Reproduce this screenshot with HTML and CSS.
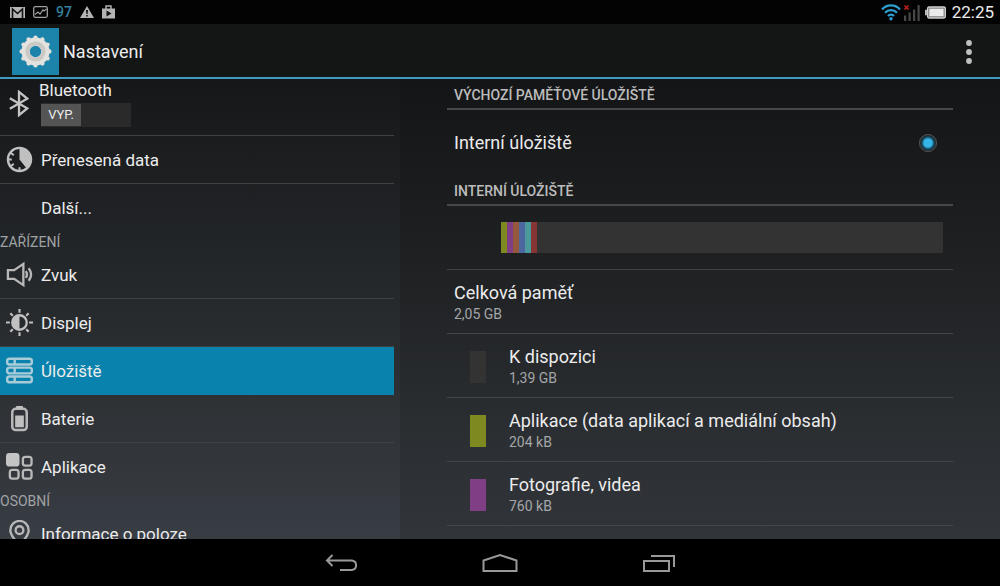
FILE: index.html
```html
<!DOCTYPE html>
<html lang="cs">
<head>
    <meta charset="UTF-8">
    <meta name="viewport" content="width=device-width, initial-scale=1.0">
    <title>Nastavení</title>
    <link rel="stylesheet" href="styles.css">
</head>
<body>
    <div class="status-bar">
        <div class="status-group status-left">
            <svg width="15" height="12" viewBox="0 0 15 12"><path fill="#b4b4b4" d="M0 1h15v11H0z"/><path fill="none" stroke="#111" stroke-width="1.600" d="M2.500 12V3l5 4.500 5-4.500v9"/></svg>
            <svg width="15" height="12" viewBox="0 0 15 12"><rect x=".7" y=".7" width="13.600" height="10.600" rx="1.500" fill="none" stroke="#a0a0a0" stroke-width="1.300"/><path fill="none" stroke="#a0a0a0" stroke-width="1.200" d="M2 8.500l3-2.500 2 2 3-4 1 1 2.500-2"/></svg>
            <span class="status-count">97</span>
            <svg width="14" height="12" viewBox="0 0 14 12"><path fill="#b4b4b4" d="M7 0l7 12H0z"/><path fill="#111" d="M6 4h2l-.4 4H6.400zM6.200 9h1.600v1.500H6.200z"/></svg>
            <svg width="13" height="14" viewBox="0 0 13 14"><path fill="none" stroke="#b4b4b4" stroke-width="1.400" d="M4 4V1h5v3"/><path fill="#b4b4b4" d="M0 3.500h13v10H0z"/><path fill="#111" d="M4.500 5.500l5 3-5 3z"/></svg>
        </div>
        <div class="status-group status-right">
            <svg width="20" height="18" viewBox="0 0 20 18"><g fill="none" stroke="#2f9fd0" stroke-width="2.200"><path d="M1 6.500c5-5.500 13-5.500 18 0"/><path d="M4 9.800c3.300-3.600 8.700-3.600 12 0"/><path d="M7 13c1.700-1.800 4.300-1.800 6 0"/></g><circle cx="10" cy="15.800" r="1.700" fill="#2f9fd0"/></svg>
            <svg class="signal" width="18" height="18" viewBox="0 0 18 18"><path fill="#484848" d="M1 12.500h2.200V18H1zM5.500 9.500h2.200V18H5.500zM10 6.500h2.200V18H10zM14.500 2h2.200v16h-2.200z"/><path stroke="#c02018" stroke-width="1.600" d="M1.500 2.500l4 4m0-4l-4 4"/></svg>
            <svg class="battery" width="21" height="13" viewBox="0 0 22 13"><rect x="2.700" y=".7" width="18.600" height="11.600" rx="1.500" fill="#777" stroke="#d0d0d0" stroke-width="1.400"/><path fill="#bbb" d="M0 3.500h2v6H0z"/><path fill="#ececec" d="M4.500 2.500h15v8h-15z"/></svg>
            <time class="clock">22:25</time>
        </div>
    </div>

    <header class="action-bar">
        <span class="app-icon">
            <svg width="33" height="33" viewBox="-16 -16 32 32">
                <circle r="13.500" fill="none" stroke="#e2e0dd" stroke-width="4.200" stroke-linecap="round" stroke-dasharray="0 1" pathLength="12"/>
                <circle r="9.600" fill="none" stroke="#e4e2df" stroke-width="8"/>
                <circle r="7.800" fill="none" stroke="#cbc9c6" stroke-width="4"/>
            </svg>
        </span>
        <h1>Nastavení</h1>
        <button class="overflow" aria-label="Další možnosti">
            <svg width="6" height="24" viewBox="0 0 6 24"><g fill="#c0c0c0"><circle cx="3" cy="3" r="2.900"/><circle cx="3" cy="12" r="2.900"/><circle cx="3" cy="21" r="2.900"/></g></svg>
        </button>
    </header>

    <main class="content">
        <nav class="sidebar">
            <div class="item item-bluetooth">
                <svg class="icon" viewBox="0 0 28 28"><path fill="none" stroke="#c4c4c4" stroke-width="2.400" d="M4 8.500l18 10.500-8.500 7V2l8.500 7-18 10.500"/></svg>
                <div class="bluetooth">
                    <span>Bluetooth</span>
                    <button class="switch" role="switch" aria-checked="false" aria-label="Bluetooth"><span class="thumb">VYP.</span></button>
                </div>
            </div>
            <a class="item" href="#">
                <svg class="icon" viewBox="0 0 28 28"><circle cx="14" cy="14" r="12" fill="none" stroke="#c0c0c0" stroke-width="2.400"/><path fill="#c0c0c0" d="M14 2a12 12 0 0 1 7.500 21.400L14 14z"/><path stroke="#c0c0c0" stroke-width="2" d="M2 14h4M14 22v4M5 7l3 2.500M5 21l3-2.500"/></svg>
                <span>Přenesená data</span>
            </a>
            <a class="item item-last" href="#">
                <span class="icon"></span>
                <span>Další...</span>
            </a>
            <h2>ZAŘÍZENÍ</h2>
            <a class="item" href="#">
                <svg class="icon" viewBox="0 0 28 28"><g fill="none" stroke="#b8b8b8" stroke-width="2.400"><path d="M2 9.500h6.500L18 3v22l-9.500-6.500H2z"/><path d="M20.500 10.500q2.500 3.500 0 7M23.500 7.500q5 6.500 0 13"/></g></svg>
                <span>Zvuk</span>
            </a>
            <a class="item" href="#">
                <svg class="icon" viewBox="0 0 28 28"><circle cx="14" cy="14" r="7.500" fill="none" stroke="#c0c0c0" stroke-width="2.400"/><path fill="#c0c0c0" d="M14 6a8 8 0 0 0 0 16z"/><path stroke="#c0c0c0" stroke-width="2.200" d="M14 0v4M14 24v4M0 14h4M24 14h4M4.500 4.500l2.500 2.500M21 21l2.500 2.500M4.500 23.500L7 21M21 7l2.500-2.500"/></svg>
                <span>Displej</span>
            </a>
            <a class="item item-active" href="#" aria-current="page">
                <svg class="icon" viewBox="0 0 28 28"><g fill="none" stroke="#a9cbd8" stroke-width="2.500"><rect x="1.200" y="1.800" width="25.600" height="6" rx="2.500"/><rect x="1.200" y="11" width="25.600" height="6" rx="2.500"/><rect x="1.200" y="20.200" width="25.600" height="6" rx="2.500"/><path d="M9 2v6M9 11v6M9 20v6"/></g></svg>
                <span>Úložiště</span>
            </a>
            <a class="item" href="#">
                <svg class="icon" viewBox="0 0 28 28"><rect x="6.500" y="4" width="15" height="22" rx="3.500" fill="none" stroke="#b8b8b8" stroke-width="2.600"/><path fill="#c0c0c0" d="M10.500 1h7v3h-7zM9.500 11h9v12h-9z"/></svg>
                <span>Baterie</span>
            </a>
            <a class="item item-last" href="#">
                <svg class="icon" viewBox="0 0 28 28"><rect width="14" height="14" rx="3.500" fill="#c4c4c4"/><g fill="none" stroke="#b8b8b8" stroke-width="2.400"><rect x="17.500" y="4" width="9" height="9" rx="2.500"/><rect x="4" y="17.500" width="9" height="9" rx="2.500"/><rect x="17.500" y="17.500" width="9" height="9" rx="2.500"/></g></svg>
                <span>Aplikace</span>
            </a>
            <h2>OSOBNÍ</h2>
            <a class="item" href="#">
                <svg class="icon" viewBox="0 0 28 28"><g fill="none" stroke="#b8b8b8" stroke-width="2.400"><path d="M14 27C10 21 4.500 16.500 4.500 10.500a9.500 9.500 0 0 1 19 0C23.500 16.500 18 21 14 27z"/><circle cx="14" cy="10.500" r="4"/></g></svg>
                <span>Informace o poloze</span>
            </a>
        </nav>

        <section class="storage">
            <h3>VÝCHOZÍ PAMĚŤOVÉ ÚLOŽIŠTĚ</h3>
            <div class="choice">
                <label for="internal">Interní úložiště</label>
                <input type="radio" id="internal" name="storage" checked>
            </div>
            <h3>INTERNÍ ÚLOŽIŠTĚ</h3>
            <div class="usage">
                <div class="usage-bar">
                    <i class="olive"></i><i class="purple"></i><i class="brown"></i><i class="blue"></i><i class="teal"></i><i class="red"></i>
                </div>
            </div>
            <div class="entry">
                <div><p>Celková paměť</p><small>2,05 GB</small></div>
            </div>
            <div class="entry">
                <i class="swatch gray"></i>
                <div><p>K dispozici</p><small>1,39 GB</small></div>
            </div>
            <div class="entry">
                <i class="swatch olive"></i>
                <div><p>Aplikace (data aplikací a mediální obsah)</p><small>204 kB</small></div>
            </div>
            <div class="entry">
                <i class="swatch purple"></i>
                <div><p>Fotografie, videa</p><small>760 kB</small></div>
            </div>
        </section>
    </main>

    <footer class="nav-bar">
        <button aria-label="Zpět"><svg width="34" height="20" viewBox="0 0 34 20"><path fill="none" stroke="#999" stroke-width="2" d="M8.500 2L3 7.500 8.500 13M3 7.500h25a4.800 4.800 0 0 1 0 9.500H16"/></svg></button>
        <button aria-label="Domů"><svg width="36" height="20" viewBox="0 0 36 20"><path fill="none" stroke="#999" stroke-width="2" d="M1.500 18V7.500L18 2l16.500 5.500V18z"/></svg></button>
        <button aria-label="Poslední aplikace"><svg width="34" height="20" viewBox="0 0 34 20"><path fill="none" stroke="#999" stroke-width="2" d="M2 8h25v10H2zM9 3h23v11"/></svg></button>
    </footer>
</body>
</html>
```

FILE: styles.css
```css
* {
    box-sizing: border-box;
}
body {
    margin: 0;
    height: 100vh;
    display: flex;
    flex-direction: column;
    overflow: hidden;
    background: #000;
    color: #ececec;
    font-family: Roboto, sans-serif;
    font-size: 17px;
    line-height: 20px;
}
h1, h2, h3, p {
    margin: 0;
    font-weight: 400;
}
h1 {
    font-size: 18px;
}
button {
    padding: 0;
    border: none;
    background: none;
    color: inherit;
    font-family: inherit;
    cursor: pointer;
}
svg {
    display: block;
    flex: none;
}

/* status bar */
.status-bar {
    flex: none;
    height: 24px;
    padding: 0 6px 0 10px;
    display: flex;
    justify-content: space-between;
    background: #030303;
}
.status-group {
    display: flex;
    align-items: center;
}
.status-left {
    gap: 8px;
}
.status-count {
    color: #347f9f;
    font-size: 14px;
    font-weight: 500;
}
.signal {
    margin-left: 2px;
}
.battery {
    margin: 0 6px 0 4px;
}
.clock {
    font-size: 17px;
}

/* title bar */
.action-bar {
    flex: none;
    height: 55px;
    padding: 2px 28px 0 12px;
    display: flex;
    align-items: center;
    gap: 4px;
    background: #141515;
    border-bottom: 2px solid #3f9cc0;
}
.app-icon {
    width: 47px;
    height: 47px;
    display: grid;
    place-items: center;
    background: #1c84aa;
}
.overflow {
    margin-left: auto;
}

.content {
    flex: 1;
    min-height: 0;
    display: flex;
    overflow: hidden;
    background: linear-gradient(#141517, #1e2022 38%, #292c2f 70%, #31353b);
}

/* category list */
.sidebar {
    flex: 0 0 40%;
    padding-right: 6px;
    overflow: hidden;
    background: linear-gradient(#161718, #222528 36%, #2d3033 66%, #383d44);
}
.sidebar h2 {
    height: 19px;
    font-size: 14px;
    color: #a0a2a4;
}
.item {
    height: 48px;
    padding-left: 6px;
    display: flex;
    align-items: center;
    gap: 8px;
    border-bottom: 1px solid #3f4144;
    color: inherit;
    text-decoration: none;
}
.item-last {
    border-bottom-color: transparent;
}
.item-active {
    background: #0983ad;
    border-bottom-color: #0983ad;
}
.item-bluetooth {
    height: 57px;
    padding-bottom: 8px;
    gap: 6px;
}
.icon {
    width: 27px;
    height: 27px;
}
.bluetooth {
    display: flex;
    flex-direction: column;
    gap: 3px;
}
.switch {
    width: 90px;
    height: 24px;
    margin-left: 2px;
    display: flex;
    background: #2a2a2a;
    font-size: 13px;
}
.thumb {
    width: 40px;
    height: 22px;
    margin: 1px 0;
    line-height: 22px;
    background: #545454;
}

/* storage details */
.storage {
    flex: 1;
    padding: 0 47px;
    overflow: hidden;
    font-size: 18px;
}
.storage h3 {
    height: 31px;
    padding: 6px 7px 0;
    font-size: 14px;
    font-weight: 500;
    color: #bcbcbc;
    border-bottom: 2px solid #46484a;
}
.choice {
    height: 65px;
    padding: 0 16px 0 7px;
    display: flex;
    align-items: center;
    justify-content: space-between;
}
.choice input {
    appearance: none;
    width: 18px;
    height: 18px;
    margin: 0;
    border: 1px solid #55595c;
    border-radius: 50%;
    background: radial-gradient(#35b5e8 0 4px, #17495c 6px, #1a2227 8px);
}
.usage {
    padding: 16px 10px 16px 54px;
    border-bottom: 1px solid #3f4245;
}
.usage-bar {
    height: 31px;
    display: flex;
    background: #333;
}
.usage-bar i {
    width: 6px;
}
.entry {
    height: 64px;
    padding: 2px 7px 0;
    display: flex;
    align-items: center;
    border-bottom: 1px solid #43474a;
}
.entry p {
    line-height: 22px;
}
.entry small {
    display: block;
    font-size: 14px;
    color: #a4a6a8;
}
.swatch {
    width: 16px;
    height: 32px;
    margin: 0 23px 0 16px;
}
.gray { background: #333; }
.olive { background: #7e8a1f; }
.purple { background: #803f85; }
.brown { background: #96583c; }
.blue { background: #4c66a0; }
.teal { background: #4a9a9c; }
.red { background: #863434; }

/* system buttons */
.nav-bar {
    flex: none;
    height: 47px;
    display: flex;
    align-items: center;
    justify-content: center;
    gap: 124px;
    background: #000;
}
```
